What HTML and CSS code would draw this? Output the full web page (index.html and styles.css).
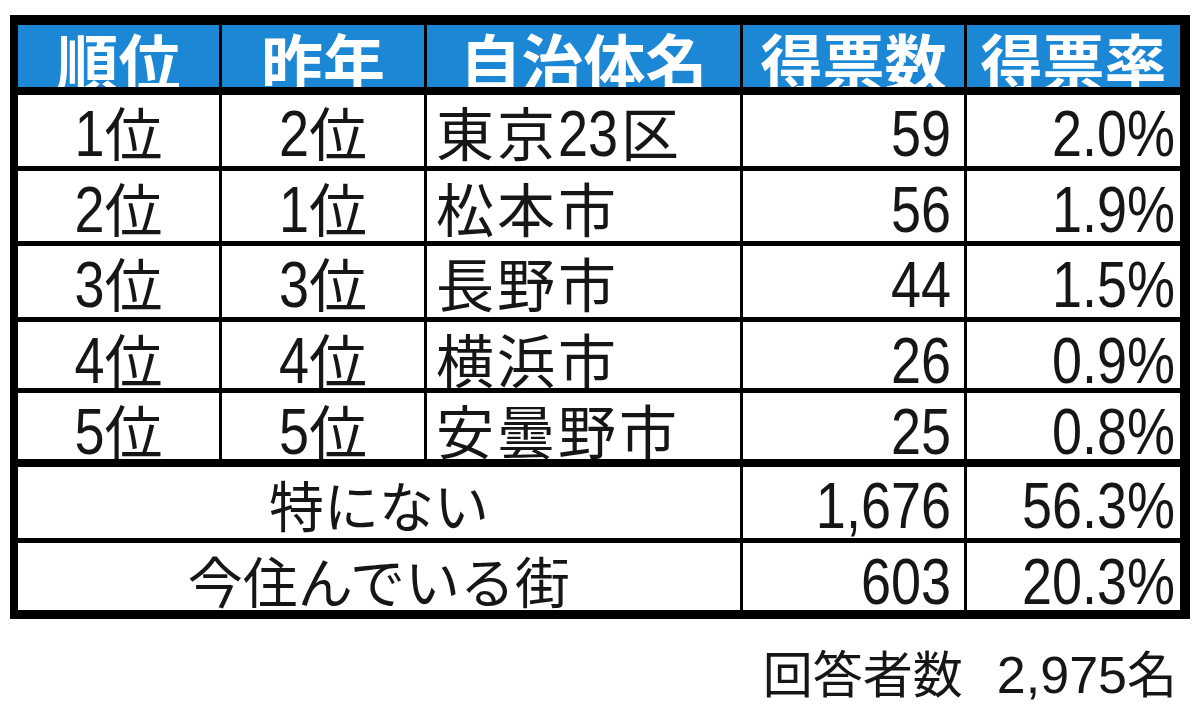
FILE: index.html
```html
<!DOCTYPE html>
<html lang="ja">
<head>
<meta charset="utf-8">
<title>住みたい街ランキング</title>
<link rel="stylesheet" href="styles.css">
</head>
<body>
<div class="wrap">
  <div class="board">
    <div class="row head">
      <div class="c hc">順位</div>
      <div class="c hc">昨年</div>
      <div class="c hc">自治体名</div>
      <div class="c hc">得票数</div>
      <div class="c hc">得票率</div>
    </div>
    <div class="row r1">
      <div class="c ctr"><span class="n">1</span>位</div>
      <div class="c ctr"><span class="n">2</span>位</div>
      <div class="c name">東京<span class="n">23</span>区</div>
      <div class="c num"><span class="n">59</span></div>
      <div class="c pct"><span class="n">2.0%</span></div>
    </div>
    <div class="row r2">
      <div class="c ctr"><span class="n">2</span>位</div>
      <div class="c ctr"><span class="n">1</span>位</div>
      <div class="c name">松本市</div>
      <div class="c num"><span class="n">56</span></div>
      <div class="c pct"><span class="n">1.9%</span></div>
    </div>
    <div class="row r3">
      <div class="c ctr"><span class="n">3</span>位</div>
      <div class="c ctr"><span class="n">3</span>位</div>
      <div class="c name">長野市</div>
      <div class="c num"><span class="n">44</span></div>
      <div class="c pct"><span class="n">1.5%</span></div>
    </div>
    <div class="row r4">
      <div class="c ctr"><span class="n">4</span>位</div>
      <div class="c ctr"><span class="n">4</span>位</div>
      <div class="c name">横浜市</div>
      <div class="c num"><span class="n">26</span></div>
      <div class="c pct"><span class="n">0.9%</span></div>
    </div>
    <div class="row r5">
      <div class="c ctr"><span class="n">5</span>位</div>
      <div class="c ctr"><span class="n">5</span>位</div>
      <div class="c name">安曇野市</div>
      <div class="c num"><span class="n">25</span></div>
      <div class="c pct"><span class="n">0.8%</span></div>
    </div>
    <div class="row merged r6">
      <div class="c ctr kana">特にない</div>
      <div class="c num"><span class="n">1,676</span></div>
      <div class="c pct"><span class="n">56.3%</span></div>
    </div>
    <div class="row merged r7">
      <div class="c ctr kana">今住んでいる街</div>
      <div class="c num"><span class="n">603</span></div>
      <div class="c pct"><span class="n">20.3%</span></div>
    </div>
  </div>
  <div class="foot">回答者数<span class="fnum">2,975</span>名</div>
</div>
</body>
</html>
```

FILE: styles.css
```css
html, body {
  margin: 0;
  padding: 0;
  background: #ffffff;
}

body {
  font-family: "Noto Sans CJK JP", "Liberation Sans", sans-serif;
  color: #161616;
}

.wrap {
  width: 1180px;
  margin: 15px 0 0 10px;
}

.board {
  box-sizing: border-box;
  width: 1180px;
  border-style: solid;
  border-color: #000;
  border-width: 10px 10px 9px 8px;
  background: #fff;
}

.row {
  display: grid;
  grid-template-columns: 204px 205px 316px 224px 213px;
  box-sizing: border-box;
  border-bottom: 5px solid #000;
}

.row.merged {
  grid-template-columns: 725px 224px 213px;
}

.head {
  height: 70px;
  border-bottom-width: 8px;
  background: #1c87d4;
}

.r1 { height: 76px; }
.r2 { height: 75px; }
.r3 { height: 76px; }
.r4 { height: 71px; }
.r5 { height: 74px; border-bottom-width: 8px; }
.r6 { height: 76px; }
.r7 { height: 67px; border-bottom-width: 0; }

.c {
  box-sizing: border-box;
  border-right: 3px solid #000;
  overflow: hidden;
  white-space: nowrap;
  font-size: 58px;
  line-height: 60px;
  padding-top: 6px;
}

.c:last-child {
  border-right: 0;
}

.hc {
  color: #ffffff;
  font-weight: 700;
  font-size: 62px;
  line-height: 62px;
  padding-top: 4px;
  text-align: center;
}

.ctr { text-align: center; }

.name {
  text-align: left;
  padding-left: 9px;
  letter-spacing: 3px;
}

.num {
  text-align: right;
  padding-right: 13px;
}

.pct {
  text-align: right;
  padding-right: 5px;
}

.kana {
  font-size: 55px;
}

.n {
  display: inline-block;
  font-family: "Liberation Sans", Arial, sans-serif;
  font-size: 54px;
  line-height: 48px;
  letter-spacing: 0;
  transform: scaleY(1.2);
  transform-origin: 50% 42.7px;
}

.name .n {
  margin-right: 3px;
}

.foot {
  box-sizing: border-box;
  width: 1180px;
  margin-top: 22px;
  padding-right: 13px;
  text-align: right;
  font-size: 50px;
  line-height: 60px;
  white-space: nowrap;
}

.fnum {
  font-family: "Liberation Sans", Arial, sans-serif;
  font-size: 52px;
  margin-left: 34px;
}
```
